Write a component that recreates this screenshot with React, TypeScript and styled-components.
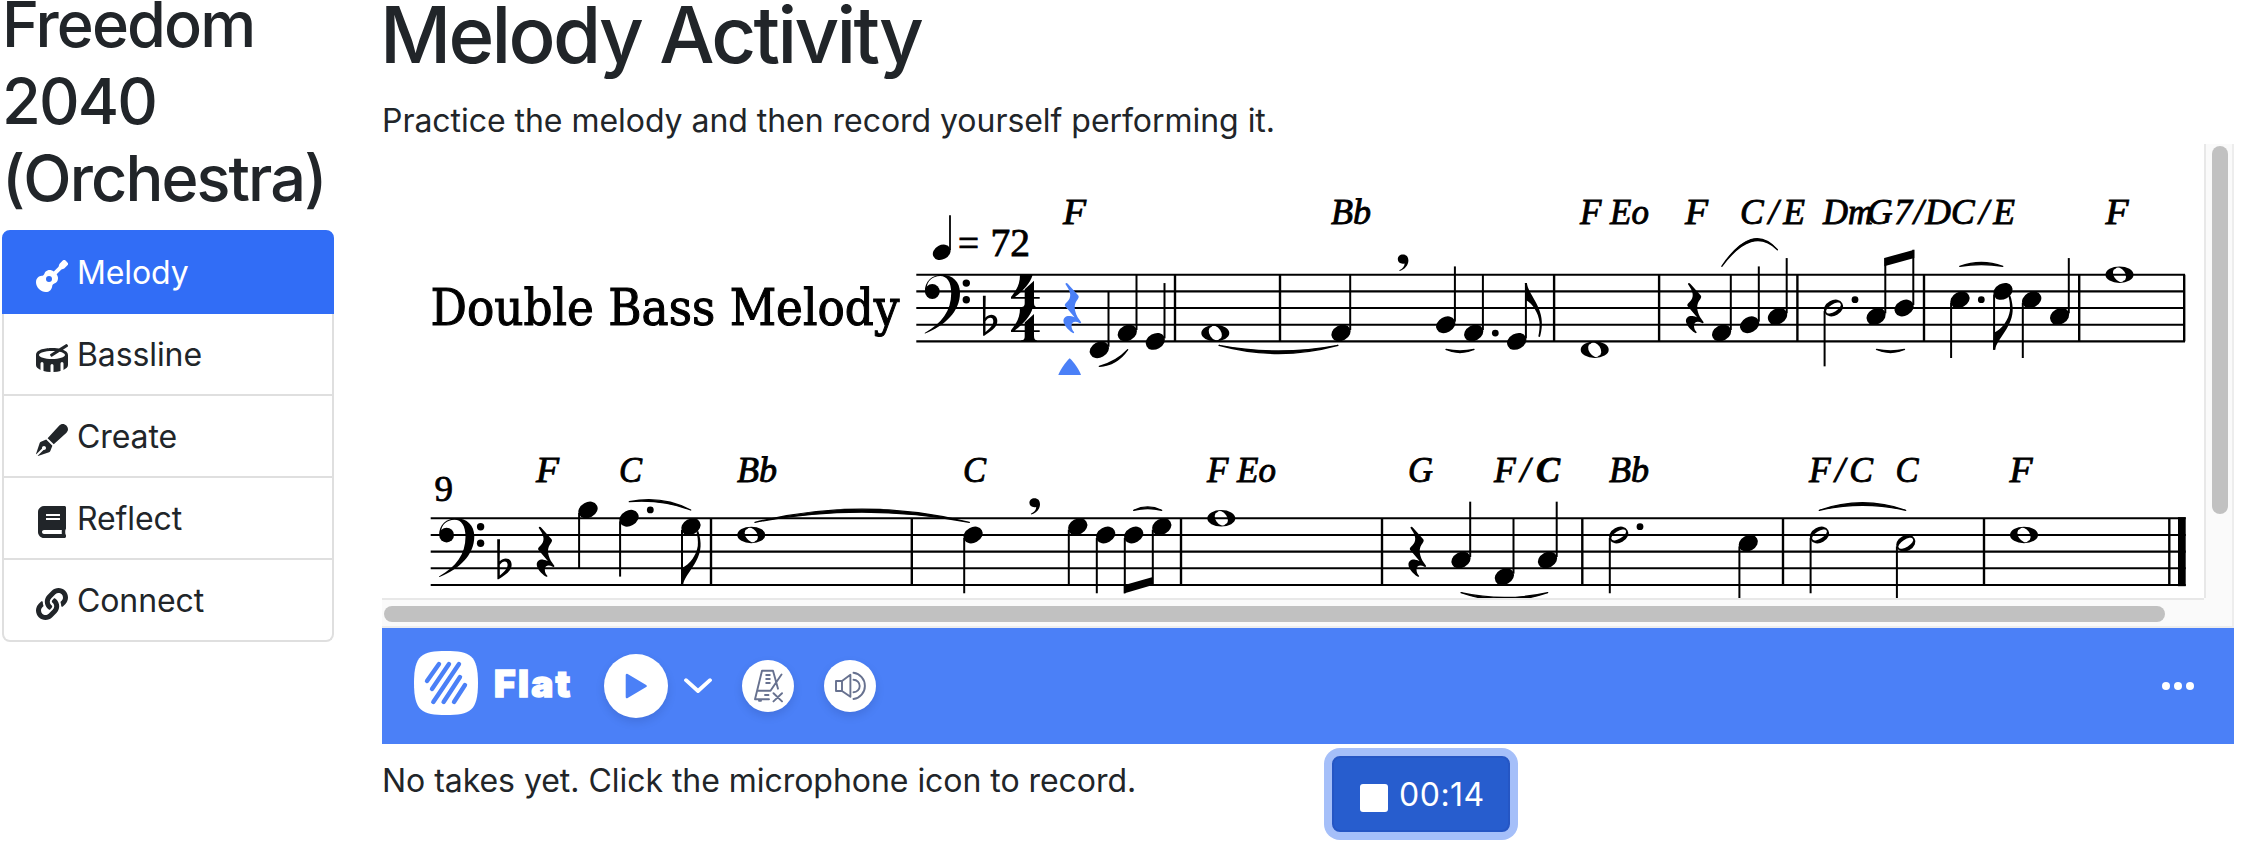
import React from "react";
import styled, { createGlobalStyle, css } from "styled-components";
import { FaGuitar, FaDrum, FaPenFancy, FaBook, FaLink } from "react-icons/fa";

const GlobalStyle = createGlobalStyle`
  *, *::before, *::after { box-sizing: border-box; }
  body {
    margin: 0;
    background: #fff;
    color: #212529;
    font-family: Inter, "Liberation Sans", sans-serif;
    font-size: 32px;
    line-height: 48px;
    letter-spacing: -0.04px;
    overflow: hidden;
  }
`;

const Page = styled.div`
  display: flex;
  gap: 48px;
  width: 2242px;
  height: 858px;
  padding: 0 8px 0 2px;
  overflow: hidden;
`;

const Sidebar = styled.aside`
  flex: 0 0 332px;
  min-width: 0;
`;

const SongTitle = styled.h2`
  margin: -14px 0 13.6px;
  font-size: 63px;
  font-weight: 500;
  line-height: 76.8px;
  letter-spacing: -1.9px;
`;

const StepList = styled.nav`
  display: flex;
  flex-direction: column;
  border-radius: 8px;
`;

const Step = styled.a<{ $active?: boolean }>`
  display: flex;
  align-items: center;
  gap: 9px;
  height: 82px;
  padding: 2px 32px 0;
  border: 2px solid #dfdfdf;
  border-top-width: 0;
  letter-spacing: -0.1px;
  &:first-child { height: 84px; border-radius: 8px 8px 0 0; }
  &:last-child { border-radius: 0 0 8px 8px; }
  ${(p) =>
    p.$active &&
    css`
      color: #fff;
      background: #316df6;
      border-color: #316df6;
      border-top-width: 2px;
    `}
`;

const StepIcon = styled.span`
  display: flex;
  justify-content: center;
  width: 32px;
  margin-top: 6px;
  font-size: 32px;
`;

const Main = styled.main`
  display: flex;
  flex-direction: column;
  flex: 0 0 1852px;
`;

const Title = styled.h1`
  margin: -13px 0 13px -2px;
  font-size: 78px;
  font-weight: 500;
  line-height: 96px;
  letter-spacing: -2.7px;
`;

const Lead = styled.p`
  margin: 0;
  height: 48px;
  padding-top: 1px;
`;

const ScoreFrame = styled.section`
  display: grid;
  grid-template-columns: 1822px 30px;
  grid-template-rows: 454px 30px;
  height: 484px;
  background: #fafafa;
`;

const ScoreSheet = styled.svg`
  display: block;
  width: 1822px;
  height: 454px;
  background: #fff;
  letter-spacing: 0;
`;

const VerticalTrack = styled.div`
  padding: 2px 4px 0 6px;
  border-left: 2px solid #e8e8e8;
  border-right: 2px solid #ededed;
`;

const HorizontalTrack = styled.div`
  padding: 6px 0 0 2px;
  border-top: 2px solid #e8e8e8;
  border-bottom: 2px solid #ededed;
`;

const TrackCorner = styled.div`
  border-right: 2px solid #ededed;
  border-bottom: 2px solid #ededed;
`;

const Thumb = styled.div<{ $w: number; $h: number }>`
  width: ${(p) => p.$w}px;
  height: ${(p) => p.$h}px;
  border-radius: 8px;
  background: #c1c1c1;
`;

const Player = styled.footer`
  display: flex;
  align-items: center;
  height: 116px;
  padding: 0 40px 0 32px;
  background: #4b80f7;
  color: #fff;
`;

const LogoMark = styled.svg`
  flex: none;
  width: 64px;
  height: 64px;
  margin: -6px 16px 0 0;
`;

const LogoText = styled.span`
  flex: none;
  width: 110px;
  margin-top: -4px;
  font-size: 37px;
  font-weight: 900;
  letter-spacing: 2.3px;
  -webkit-text-stroke: 1.4px #fff;
`;

const RoundButton = styled.button<{ $size: number }>`
  display: flex;
  flex: none;
  align-items: center;
  justify-content: center;
  width: ${(p) => p.$size}px;
  height: ${(p) => p.$size}px;
  padding: 0;
  border: 0;
  border-radius: 50%;
  background: #fff;
  box-shadow: 0 4px 10px rgba(0, 0, 40, 0.12);
  & + & { margin-left: 30px; }
`;

const Chevron = styled.svg`
  flex: none;
  width: 28px;
  height: 16px;
  margin: 0 30px 0 16px;
`;

const Dots = styled.svg`
  width: 32px;
  height: 8px;
  margin-left: auto;
`;

const TakesRow = styled.div`
  display: grid;
  grid-template-columns: 950px max-content;
  align-items: start;
  padding-top: 12px;
`;

const TakesNote = styled.span`
  padding-top: 1px;
`;

const RecordButton = styled.button`
  display: flex;
  align-items: center;
  gap: 11px;
  width: 178px;
  height: 76px;
  padding: 1px 0 0 26px;
  border: 2px solid #2556c4;
  border-radius: 8px;
  background: #275dce;
  box-shadow: 0 0 0 8px #a5bff9;
  color: #fff;
  font: inherit;
  letter-spacing: 0.5px;
`;

const StopSquare = styled.span`
  flex: none;
  width: 28px;
  height: 28px;
  margin-top: 7px;
  border-radius: 3px;
  background: #fff;
`;

/* ---------- score drawing ---------- */

const LINE_GAP = 16.67;
const STAFF_1 = 274.7;
const STAFF_2 = 518.3;
const yAt = (staff: number, step: number) => staff + (step * LINE_GAP) / 2;

type NoteProps = {
  staff: number;
  x: number;
  step: number;
  kind?: "quarter" | "half" | "whole";
  up?: boolean;
  flag?: boolean;
  dot?: number;
};

const HEAD = "M-8.75,4.8 A10,7.3 -29 1 1 8.75,-4.8 A10,7.3 -29 1 1 -8.75,4.8Z";
const HALF_HOLE = "M-7,4.4 A8.3,3.4 -32 1 0 7,-4.4 A8.3,3.4 -32 1 0 -7,4.4Z";
const WHOLE =
  "M-14,0 A14,8.3 0 1 1 14,0 A14,8.3 0 1 1 -14,0Z M-4,-6 A7.4,4.7 56 1 0 4,6 A7.4,4.7 56 1 0 -4,-6Z";
const FLAG =
  "M-1,0 H1 C2,11 17,23 16,42 C15.8,46 15,51 14,54 L12.4,53.4 C13.4,49 14,44 13.6,39 C12.5,30 7,21 0,17 Z";

const Note = ({ staff, x, step, kind = "quarter", up, flag, dot }: NoteProps) => {
  const y = yAt(staff, step);
  const sx = up ? x + 9.2 : x - 8.9;
  const end = up ? y - 58.3 : y + 58.3;
  const d = kind === "whole" ? WHOLE : kind === "half" ? HEAD + HALF_HOLE : HEAD;
  return (
    <g>
      <path d={d} transform={`translate(${x} ${y})`} fillRule="evenodd" />
      {kind !== "whole" && (
        <line x1={sx} x2={sx} y1={up ? y - 3 : y + 3} y2={end} stroke="#000" strokeWidth="2" />
      )}
      {flag && <path d={FLAG} transform={`translate(${sx} ${end}) scale(${up ? "1 1" : "1.16 -1"})`} />}
      {dot && <circle cx={dot} cy={step % 2 ? y : y - LINE_GAP / 2} r="3.4" />}
    </g>
  );
};

const Rest = ({ x, y, fill = "#000" }: { x: number; y: number; fill?: string }) => (
  <path
    fill={fill}
    transform={`translate(${x} ${y})`}
    d="M-6.6,-24 C-6.2,-25.4 -5,-25.2 -4,-24 L6.3,-12.5 C7.5,-11 6,-9 4.5,-7 C2,-3 2,2 5.5,9 L9,14 C9.5,15 8.5,15.5 7.5,15 C3,12.5 -0.5,14 -0.5,18 C-0.5,21 1,23 2,24 C2.5,25 1.5,25.5 0.5,24.8 C-4,22 -8,17 -8.5,13.5 C-9,9.5 -5.5,7.5 -2,8 C0,8.2 1.5,9 2.5,9.3 L-7,-2 C-7.5,-3 -7,-4 -6,-5 C-1.5,-9 -0.5,-13 -3.5,-19Z"
  />
);

/* Tapered curve through (mx, my), thickest in the middle. */
const Slur = ({ p }: { p: [number, number, number, number, number, number, number?] }) => {
  const [x1, y1, mx, my, x2, y2, t = 3] = p;
  const cx = 2 * mx - (x1 + x2) / 2;
  const cy = 2 * my - (y1 + y2) / 2;
  return (
    <path
      d={`M${x1},${y1} Q${cx},${cy - t} ${x2},${y2} Q${cx},${cy + t} ${x1},${y1}Z`}
      stroke="#000"
      strokeWidth="1.3"
      strokeLinejoin="round"
    />
  );
};

const Staff = ({ top, x1, x2, bars }: { top: number; x1: number; x2: number; bars: number[] }) => (
  <g stroke="#000">
    {[0, 2, 4, 6, 8].map((s) => (
      <line key={s} x1={x1} x2={x2} y1={yAt(top, s)} y2={yAt(top, s)} strokeWidth="2.1" />
    ))}
    {bars.map((b) => (
      <line key={b} x1={b} x2={b} y1={top} y2={top + 4 * LINE_GAP} strokeWidth="2.4" />
    ))}
  </g>
);

const ClefAndKey = ({ x, y }: { x: number; y: number }) => (
  <g transform={`translate(${x} ${y})`}>
    <path d="M0.3,17 C-0.5,6.5 8,0 17,0 C28,0 35.3,7 35.3,18 C35.3,37 20,51 0.5,58.8 C0,58.9 -0.2,58.3 0.3,58 C17,48.5 26.5,36 26.5,18.5 C26.5,7.5 22.5,1.4 15.5,1.4 C8,1.4 2,6.5 2,14 Z" />
    <circle cx="7.6" cy="16.8" r="7.4" />
    <circle cx="41.6" cy="8.4" r="3.7" />
    <circle cx="41.6" cy="25" r="3.7" />
    <path
      transform="translate(59.6 50)"
      fillRule="evenodd"
      d="M-1.4,-29 H1.4 L1.1,-7 C4,-10 7.5,-10.5 10,-9.2 C13,-7.7 13.8,-3.5 12.3,0 C10,5 4.5,7.5 0,11 L-1.2,11 Z M1.2,-3.5 V7.2 C5,4 9,0.5 9,-3.5 C9,-8 4,-8 1.2,-3.5Z"
    />
  </g>
);

const TimeFour = ({ y }: { y: number }) => (
  <path
    transform={`translate(1011 ${y})`}
    d="M9,0 H21.7 C19,9 12,16 4,22.3 H13.7 V14.5 L23,6 V22.3 H28.7 V24 H23 V28 C23,31 24,32 26,32.6 V33.4 H10 V32.6 C13,32 13.7,31 13.7,28 V24 H0 V22.3 C5,16 9,10 9,0 Z"
  />
);

const Breath = ({ x, y }: { x: number; y: number }) => (
  <path
    transform={`translate(${x} ${y})`}
    d="M5,0 C8.5,0 10.6,2.3 10.6,6 C10.6,10.5 7,15 2,16.4 L1.4,15.6 C5,14 6.8,11.3 6.8,8.8 C2.8,9.8 0,7.5 0,4.6 C0,2 2.2,0 5,0Z"
  />
);

type ChordProps = { x: number; y: number; w: number; bold?: boolean; children: string };
const Chord = ({ x, y, w, bold, children }: ChordProps) => (
  <text
    x={x}
    y={y}
    textLength={w}
    lengthAdjust={children.includes("/") ? "spacing" : "spacingAndGlyphs"}
    fontFamily="'Liberation Serif', serif"
    fontStyle="italic"
    fontWeight={bold ? 700 : 400}
    fontSize="35.5"
    stroke="#000"
    strokeWidth="0.9"
  >
    {children}
  </text>
);

const ROMAN = {
  fontFamily: "'Liberation Serif', serif",
  stroke: "#000",
  strokeWidth: 0.8,
  lengthAdjust: "spacingAndGlyphs",
} as const;

const CHORDS_1: [string, number, number][] = [
  ["F", 1063, 23], ["Bb", 1331, 40], ["F Eo", 1580, 69], ["F", 1685, 23], ["C/E", 1740, 65],
  ["Dm", 1823, 50], ["G7/D", 1867, 84], ["C/E", 1951, 64], ["F", 2105.5, 23],
];
const CHORDS_2: [string, number, number][] = [
  ["F", 536, 23], ["C", 619, 23], ["Bb", 737, 40], ["C", 963, 23], ["F Eo", 1207, 69],
  ["G", 1408, 25], ["F/", 1494, 36], ["Bb", 1609, 40], ["F/C", 1809, 64], ["C", 1895.5, 23], ["F", 2009.5, 23],
];

const NOTES_1: Omit<NoteProps, "staff">[] = [
  { x: 1099.3, step: 9, up: true },
  { x: 1127.3, step: 7, up: true },
  { x: 1155.3, step: 8, up: true },
  { x: 1215.3, step: 7, kind: "whole" },
  { x: 1341, step: 7, up: true },
  { x: 1445.7, step: 6, up: true },
  { x: 1473.7, step: 7, up: true, dot: 1495.3 },
  { x: 1516.7, step: 8, up: true, flag: true },
  { x: 1594.7, step: 9, kind: "whole" },
  { x: 1721.6, step: 7, up: true },
  { x: 1749.6, step: 6, up: true },
  { x: 1777.5, step: 5, up: true },
  { x: 1833.5, step: 4, kind: "half", dot: 1855 },
  { x: 1876.1, step: 5, up: true },
  { x: 1904.1, step: 4, up: true },
  { x: 1960, step: 3, dot: 1981.3 },
  { x: 2003, step: 2, flag: true },
  { x: 2031.7, step: 3 },
  { x: 2059.6, step: 5, up: true },
  { x: 2119.5, step: 0, kind: "whole" },
];
const NOTES_2: Omit<NoteProps, "staff">[] = [
  { x: 588, step: -1 },
  { x: 629, step: 0, dot: 650.3 },
  { x: 690.9, step: 1, flag: true },
  { x: 751.3, step: 2, kind: "whole" },
  { x: 973.1, step: 2 },
  { x: 1077.7, step: 1 },
  { x: 1105.7, step: 2 },
  { x: 1133.7, step: 2 },
  { x: 1161.7, step: 1 },
  { x: 1221.3, step: 0, kind: "whole" },
  { x: 1461, step: 5, up: true },
  { x: 1504.3, step: 7, up: true },
  { x: 1547.5, step: 5, up: true },
  { x: 1618.7, step: 2, kind: "half", dot: 1640 },
  { x: 1748.3, step: 3 },
  { x: 1819.5, step: 2, kind: "half" },
  { x: 1905.8, step: 3, kind: "half" },
  { x: 2024, step: 2, kind: "whole" },
];

const SLURS: [number, number, number, number, number, number, number?][] = [
  [1099.3, 366.3, 1115, 360.8, 1127.7, 349.7, 2],
  [1219, 345.3, 1278.5, 352.2, 1338, 345.3, 2.6],
  [1446, 349.5, 1460, 351.8, 1474, 349.5, 1.8],
  [1721.8, 266.3, 1751, 240.6, 1777.4, 249.7, 2.2],
  [1876.5, 349.5, 1890.5, 351.8, 1904.5, 349.5, 1.8],
  [1959.8, 266.3, 1981.3, 263.5, 2002.8, 266.3, 2.2],
  [629.3, 501.7, 661, 501.5, 690.7, 510, 2],
  [755, 522.3, 862, 510.7, 969.3, 522.3, 3],
  [1133.7, 510.3, 1147.7, 507.8, 1161.7, 510.3, 1.8],
  [1461, 592.7, 1504.3, 598.8, 1547.7, 592.7, 2.6],
  [1819.3, 510.3, 1862.5, 504, 1905.7, 510.3, 2.6],
];

const Score = () => (
  <ScoreSheet viewBox="382 144 1822 454">
    <text
      x="430.5"
      y="325"
      fontFamily="'DejaVu Serif Condensed', 'DejaVu Serif', serif"
      fontStretch="condensed"
      fontSize="49.5"
      textLength="469"
      lengthAdjust="spacingAndGlyphs"
      stroke="#000"
      strokeWidth="1"
    >
      Double Bass Melody
    </text>

    <Staff top={STAFF_1} x1={916.3} x2={2185} bars={[1175, 1280, 1554.1, 1659.1, 1797.4, 1924, 2079.2, 2184.2]} />
    <ClefAndKey x={924.7} y={STAFF_1} />
    <TimeFour y={STAFF_1} />
    <TimeFour y={STAFF_1 + 33.3} />

    <path d={HEAD} transform="translate(941.7 252.3) scale(0.92)" />
    <line x1="950" x2="950" y1="250" y2="215.3" stroke="#000" strokeWidth="1.8" />
    <text {...ROMAN} x="958" y="256" fontSize="37" textLength="21">=</text>
    <text {...ROMAN} x="990.5" y="256" fontSize="39" textLength="39.5">72</text>

    <Rest x={1072} y={308} fill="#4b80f7" />
    <path d="M1069.7,358.3 C1074,362 1079,369.5 1081,375 H1058.3 C1060.5,369.5 1065.5,362 1069.7,358.3Z" fill="#4b80f7" />
    <Rest x={1694.5} y={308} />
    {NOTES_1.map((n) => <Note key={n.x} staff={STAFF_1} {...n} />)}
    <path d="M1884.3,258 L1914.3,249.7 V257.9 L1884.3,266.2Z" />
    <Breath x={1397.8} y={254.6} />
    {CHORDS_1.map(([t, x, w]) => <Chord key={x} x={x} y={224} w={w}>{t}</Chord>)}

    <text {...ROMAN} x="434.5" y="501" fontSize="36" textLength="18.5">9</text>
    <Staff top={STAFF_2} x1={430.7} x2={2185.7} bars={[711, 911.8, 1181, 1382, 1582.3, 1783, 1984, 2169.3]} />
    <rect x="2178" y="517.2" width="7.7" height="69" />
    <ClefAndKey x={439} y={STAFF_2} />
    <Rest x={545.3} y={551.7} />
    <Rest x={1417} y={551.7} />
    {NOTES_2.map((n) => <Note key={n.x} staff={STAFF_2} {...n} />)}
    <path d="M1123.8,585.2 L1152.8,577 V585 L1123.8,593.4Z" />
    <Breath x={1029.4} y={498.2} />
    {CHORDS_2.map(([t, x, w]) => <Chord key={x} x={x} y={482} w={w}>{t}</Chord>)}
    <Chord x={1536} y={482} w={24} bold>C</Chord>

    {SLURS.map((p) => <Slur key={p[0]} p={p} />)}
  </ScoreSheet>
);

const STEPS = [
  { label: "Melody", Icon: FaGuitar },
  { label: "Bassline", Icon: FaDrum },
  { label: "Create", Icon: FaPenFancy },
  { label: "Reflect", Icon: FaBook },
  { label: "Connect", Icon: FaLink },
];

export default function App() {
  return (
    <Page>
      <GlobalStyle />
      <Sidebar>
        <SongTitle>Freedom 2040 (Orchestra)</SongTitle>
        <StepList>
          {STEPS.map(({ label, Icon }, i) => (
            <Step key={label} $active={i === 0}>
              <StepIcon><Icon /></StepIcon>
              {label}
            </Step>
          ))}
        </StepList>
      </Sidebar>
      <Main>
        <Title>Melody Activity</Title>
        <Lead>Practice the melody and then record yourself performing it.</Lead>
        <ScoreFrame>
          <Score />
          <VerticalTrack><Thumb $w={16} $h={368} /></VerticalTrack>
          <HorizontalTrack><Thumb $w={1781} $h={16} /></HorizontalTrack>
          <TrackCorner />
        </ScoreFrame>
        <Player>
          <LogoMark viewBox="0 0 64 64">
            <path d="M32,0 C56,0 64,4 64,32 C64,60 56,64 32,64 C8,64 0,60 0,32 C0,4 8,0 32,0Z" fill="#fff" />
            <path
              d="M25,13 L13,30 M35,13 L18,38 M45,13 L19.3,51 M46,26 L29.6,51 M51,34 L40,51"
              stroke="#4b80f7"
              strokeWidth="4.4"
              strokeLinecap="round"
            />
          </LogoMark>
          <LogoText>Flat</LogoText>
          <RoundButton $size={64} aria-label="Play">
            <svg width="64" height="64" viewBox="-32 -32 64 64">
              <path d="M-9,-11 L9.5,0 L-9,11Z" fill="#4b80f7" stroke="#4b80f7" strokeWidth="2.6" strokeLinejoin="round" />
            </svg>
          </RoundButton>
          <Chevron viewBox="0 0 28 16">
            <path d="M2,2.2 L14,13 L26,2.2" fill="none" stroke="#fff" strokeWidth="3.8" strokeLinecap="round" strokeLinejoin="round" />
          </Chevron>
          <RoundButton $size={52} aria-label="Metronome">
            <svg width="52" height="52" viewBox="-26 -26 52 52" fill="none" stroke="#67718f" strokeWidth="1.9" strokeLinecap="round" strokeLinejoin="round">
              <path d="M1,13.3 H-13 L-6,-15.2 H5 L10,2.7 M13.5,-11.5 L2.5,4.7 H-10 M-3,9 H0.5 M-1.8,-11 H1.8 M-1.8,-7 H1.8 M-1.8,-3 H1.8 M-9,14.8 H-7 M5.5,7.2 L14,15.4 M14,7.2 L5.5,15.4" />
            </svg>
          </RoundButton>
          <RoundButton $size={52} aria-label="Volume">
            <svg width="52" height="52" viewBox="-26 -26 52 52" fill="none" stroke="#67718f" strokeWidth="1.9" strokeLinecap="round" strokeLinejoin="round">
              <path d="M-14,-5 H-8 V5 H-14Z M-8,-5 L0.4,-11.2 V10.8 L-8,5 M3.5,-6.2 A6.2,6.2 0 0 1 3.5,6.2 M3.5,-13.2 A13,13.2 0 0 1 3.5,13" />
            </svg>
          </RoundButton>
          <Dots viewBox="0 0 32 8" fill="#fff">
            <circle cx="4" cy="4" r="4" />
            <circle cx="16" cy="4" r="4" />
            <circle cx="28" cy="4" r="4" />
          </Dots>
        </Player>
        <TakesRow>
          <TakesNote>No takes yet. Click the microphone icon to record.</TakesNote>
          <RecordButton>
            <StopSquare />
            00:14
          </RecordButton>
        </TakesRow>
      </Main>
    </Page>
  );
}
